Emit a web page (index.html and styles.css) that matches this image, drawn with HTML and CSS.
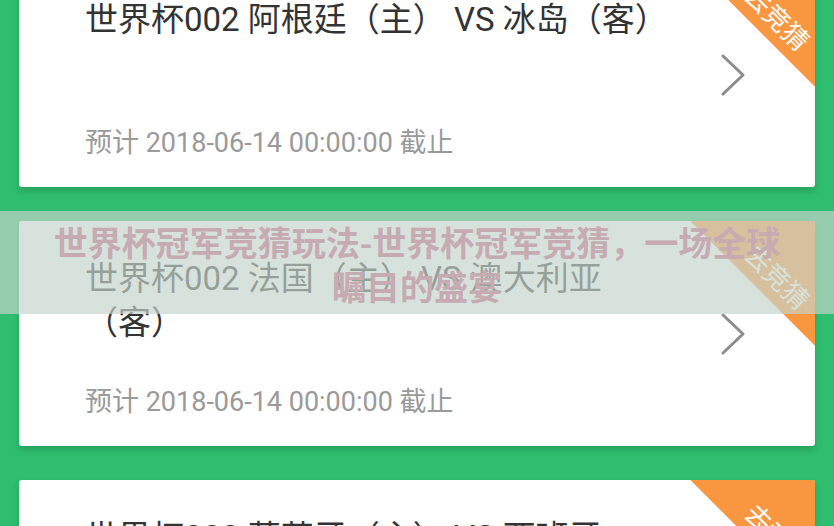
FILE: index.html
```html
<!DOCTYPE html>
<html lang="zh-CN">
<head>
<meta charset="utf-8">
<title>世界杯冠军竞猜</title>
<link rel="stylesheet" href="styles.css">
</head>
<body>
<div class="page">
  <ul class="match-list">
    <li class="card">
      <div class="info">
        <div class="title">世界杯002 阿根廷（主） VS 冰岛（客）</div>
        <div class="deadline">预计 2018-06-14 00:00:00 截止</div>
      </div>
      <svg class="chevron" width="26" height="44" viewBox="0 0 26 44"><polyline points="3,3 23,22 3,41" fill="none" stroke="#8c8c8c" stroke-width="3" stroke-linecap="round" stroke-linejoin="round"/></svg>
      <div class="ribbon"><span>去竞猜</span></div>
    </li>
    <li class="card">
      <div class="info">
        <div class="title">世界杯002 法国（主） VS 澳大利亚（客）</div>
        <div class="deadline">预计 2018-06-14 00:00:00 截止</div>
      </div>
      <svg class="chevron" width="26" height="44" viewBox="0 0 26 44"><polyline points="3,3 23,22 3,41" fill="none" stroke="#8c8c8c" stroke-width="3" stroke-linecap="round" stroke-linejoin="round"/></svg>
      <div class="ribbon"><span>去竞猜</span></div>
    </li>
    <li class="card">
      <div class="info">
        <div class="title">世界杯002 葡萄牙（主） VS 西班牙（客）</div>
        <div class="deadline">预计 2018-06-15 00:00:00 截止</div>
      </div>
      <svg class="chevron" width="26" height="44" viewBox="0 0 26 44"><polyline points="3,3 23,22 3,41" fill="none" stroke="#8c8c8c" stroke-width="3" stroke-linecap="round" stroke-linejoin="round"/></svg>
      <div class="ribbon"><span>去竞猜</span></div>
    </li>
  </ul>
  <div class="watermark">世界杯冠军竞猜玩法-世界杯冠军竞猜，一场全球瞩目的盛宴</div>
</div>
</body>
</html>
```
FILE: styles.css
```css
html, body {
  margin: 0;
  padding: 0;
}
body {
  width: 834px;
  height: 526px;
  overflow: hidden;
  background: #2fbe70;
  font-family: Roboto, "Noto Sans CJK SC", sans-serif;
}
.page {
  position: relative;
  height: 526px;
  overflow: hidden;
}
.match-list {
  list-style: none;
  margin: -38px 0 0;
  padding: 0 19px;
  display: flex;
  flex-direction: column;
  gap: 34px;
}
.card {
  position: relative;
  overflow: hidden;
  height: 225px;
  background: #fff;
  border-radius: 3px;
  box-shadow: 0 4px 7px rgba(0, 60, 20, 0.22);
  display: flex;
  align-items: center;
}
.info {
  flex: 1;
  align-self: stretch;
  display: flex;
  flex-direction: column;
  justify-content: space-between;
  padding: 36px 0 26px 66px;
}
.title {
  max-width: 585px;
  font-size: 33px;
  line-height: 44px;
  color: #333;
}
.deadline {
  font-size: 27px;
  line-height: 36px;
  color: #9a9a9a;
}
.chevron {
  flex: none;
  margin-right: 69px;
}
.ribbon {
  position: absolute;
  top: -23px;
  right: -93px;
  width: 240px;
  height: 100px;
  background: #f8973f;
  transform: rotate(45deg);
  display: flex;
  align-items: flex-end;
  justify-content: center;
  padding: 0 0 8px 26px;
  box-sizing: border-box;
}
.ribbon span {
  color: #fff;
  font-family: "Noto Sans CJK SC", sans-serif;
  font-size: 26px;
  line-height: 30px;
}
.watermark {
  position: absolute;
  top: 211px;
  left: 0;
  right: 0;
  height: 103px;
  box-sizing: border-box;
  padding: 9px 45px 0;
  background: rgba(198, 212, 204, 0.68);
  color: #c6abb3;
  font-family: "Noto Sans CJK SC", sans-serif;
  font-weight: 700;
  font-size: 34px;
  line-height: 44px;
  text-align: center;
}
```
